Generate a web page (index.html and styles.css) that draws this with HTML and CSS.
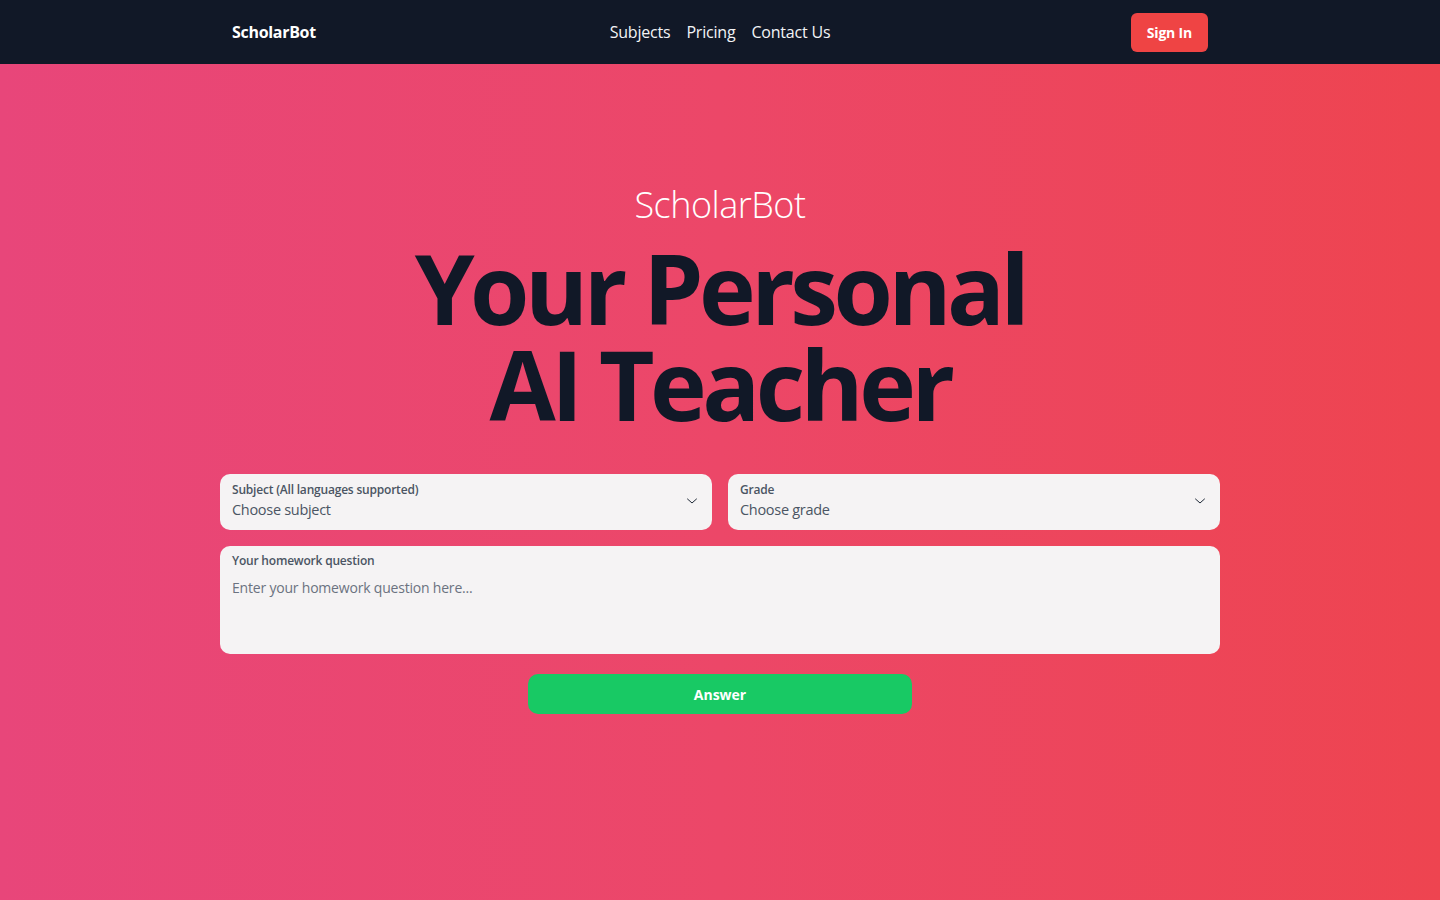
FILE: index.html
```html
<!DOCTYPE html>
<html lang="en">
<head>
    <meta charset="UTF-8">
    <meta name="viewport" content="width=device-width, initial-scale=1.0">
    <title>ScholarBot - Your Personal AI Teacher</title>
    <link rel="stylesheet" href="styles.css">
</head>
<body>
    <header class="topbar">
        <div class="topbar-inner">
            <a href="#" class="brand">ScholarBot</a>
            <nav class="nav-links">
                <a href="#">Subjects</a>
                <a href="#">Pricing</a>
                <a href="#">Contact Us</a>
            </nav>
            <button class="signin-btn">Sign In</button>
        </div>
    </header>

    <main class="hero">
        <p class="hero-kicker">ScholarBot</p>
        <h1 class="hero-title">Your Personal<br>AI Teacher</h1>

        <form class="ask-form" onsubmit="return false">
            <div class="form-row">
                <label class="field field-select">
                    <span class="field-label">Subject (All languages supported)</span>
                    <span class="field-value">Choose subject</span>
                    <svg class="chevron" width="12" height="12" viewBox="0 0 12 12" fill="none" stroke="#1f2937" stroke-width="1" stroke-linecap="round" stroke-linejoin="round"><polyline points="1.5,4 6,8 10.5,4"/></svg>
                </label>
                <label class="field field-select">
                    <span class="field-label">Grade</span>
                    <span class="field-value">Choose grade</span>
                    <svg class="chevron" width="12" height="12" viewBox="0 0 12 12" fill="none" stroke="#1f2937" stroke-width="1" stroke-linecap="round" stroke-linejoin="round"><polyline points="1.5,4 6,8 10.5,4"/></svg>
                </label>
            </div>

            <label class="field field-question">
                <span class="field-label">Your homework question</span>
                <textarea placeholder="Enter your homework question here..."></textarea>
            </label>

            <button type="submit" class="answer-btn">Answer</button>
        </form>
    </main>
</body>
</html>
```

FILE: styles.css
```css
* {
    box-sizing: border-box;
}
body {
    margin: 0;
    font-family: "Open Sans", "Noto Sans", sans-serif;
    background-color: #111827;
    color: #111827;
}
a {
    text-decoration: none;
    color: inherit;
}

/* top navigation */
.topbar {
    background-color: #111827;
    height: 64px;
}
.topbar-inner {
    max-width: 976px;
    height: 100%;
    margin: 0 auto;
    display: grid;
    grid-template-columns: 1fr auto 1fr;
    align-items: center;
}
.brand {
    color: #fff;
    font-weight: 700;
    font-size: 16px;
    letter-spacing: -0.3px;
}
.nav-links {
    display: flex;
    gap: 16px;
    font-size: 16px;
    letter-spacing: -0.2px;
}
.nav-links a {
    color: #f3f4f6;
}
.signin-btn {
    justify-self: end;
    background-color: #ef4444;
    color: #fff;
    border: none;
    border-radius: 6px;
    height: 39px;
    padding: 0 16px;
    font-family: inherit;
    font-weight: 700;
    font-size: 14px;
    letter-spacing: -0.2px;
    cursor: pointer;
}

/* hero */
.hero {
    min-height: calc(100vh - 64px);
    background: linear-gradient(to right, #e8467a, #ec4768 50%, #ee4450);
    padding: 121px 0 0;
    text-align: center;
}
.hero-kicker {
    margin: 0;
    color: #fff;
    font-size: 36px;
    line-height: 40px;
    font-weight: 300;
    letter-spacing: -0.5px;
}
.hero-title {
    margin: 15px 0 42px;
    font-size: 96px;
    line-height: 96px;
    font-weight: 700;
    letter-spacing: -4.5px;
    color: #111827;
}

/* form */
.ask-form {
    width: 1000px;
    margin: 0 auto;
    text-align: left;
}
.form-row {
    display: grid;
    grid-template-columns: 1fr 1fr;
    gap: 16px;
    margin-bottom: 16px;
}
.field {
    display: flex;
    flex-direction: column;
    background-color: #f5f3f4;
    border-radius: 10px;
    padding: 8px 12px 10px;
}
.field-select {
    position: relative;
    height: 56px;
    cursor: pointer;
}
.field-label {
    font-size: 12px;
    line-height: 16px;
    font-weight: 600;
    color: #4b5563;
    letter-spacing: -0.2px;
}
.field-value {
    font-size: 14.5px;
    line-height: 23px;
    color: #4b5563;
    letter-spacing: -0.3px;
}
.chevron {
    position: absolute;
    right: 14px;
    top: 21px;
}
.field-question {
    height: 108px;
    padding-top: 7px;
}
.field-question textarea {
    flex: 1;
    margin-top: 8px;
    border: none;
    background: transparent;
    resize: none;
    padding: 0;
    font-family: inherit;
    font-size: 14px;
    line-height: 22px;
    letter-spacing: -0.2px;
    color: #374151;
    outline: none;
}
.field-question textarea::placeholder {
    color: #6b7280;
}
.answer-btn {
    display: block;
    width: 384px;
    height: 40px;
    margin: 20px auto 0;
    background-color: #18c964;
    color: #fff;
    border: none;
    border-radius: 10px;
    font-family: inherit;
    font-size: 14px;
    font-weight: 700;
    cursor: pointer;
}
```
